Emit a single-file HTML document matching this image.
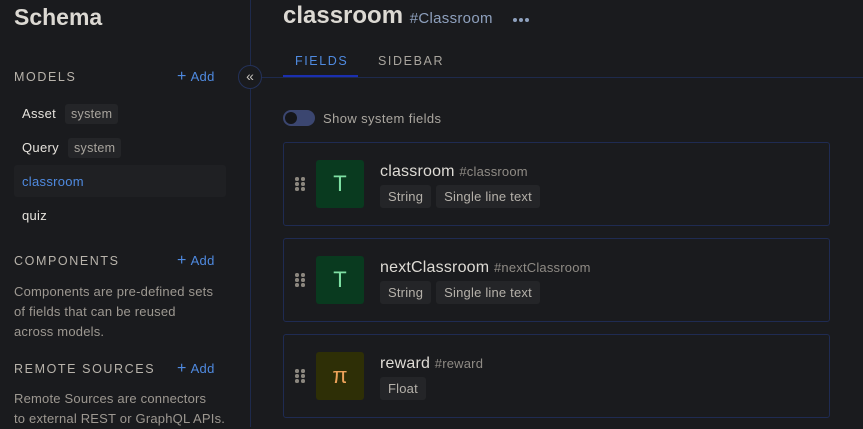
<!DOCTYPE html>
<html><head><style>
*{margin:0;padding:0;box-sizing:border-box}
body{width:863px;height:427px;overflow:hidden;background:#1a1b1e;font-family:"Liberation Sans",sans-serif;position:relative;color:#d9d6d0}
.a{position:absolute;white-space:nowrap}
.lbl{font-size:12.5px;letter-spacing:1.6px;color:#b8b3ab}
.add{color:#4f8ae0;font-size:13px;letter-spacing:0.3px}
.add b{font-weight:normal;font-size:16px;line-height:13px}
.item{font-size:13px;color:#e6e3dd;letter-spacing:0.3px}
.badge{background:#242528;color:#a8a49d;font-size:12.5px;padding:3px 6px;border-radius:3px;letter-spacing:0.3px}
.desc{font-size:13px;color:#9d9891;line-height:20px;letter-spacing:0.2px}
.card{position:absolute;left:283px;width:547px;height:84px;border:1px solid #1f2b52;border-radius:3px}
.ic{position:absolute;left:32px;top:17px;width:48px;height:48px;border-radius:3px;display:flex;align-items:center;justify-content:center;font-size:22px}
.dots{position:absolute;left:11px;top:34px;width:10px;height:14px}
.dots i{position:absolute;width:3.5px;height:3.5px;border-radius:50%;background:#8c877f}
.nm{position:absolute;left:96px;top:20px;font-size:16px;color:#dedbd5;letter-spacing:0.2px}
.nm span{font-size:13px;color:#8f8b85}
.tags{position:absolute;left:96px;top:42px;display:flex;gap:5px}
.tag{background:#242528;color:#b5b1aa;font-size:13px;padding:4px 8px;border-radius:3px;letter-spacing:0.2px}
</style></head><body>
<div class="a" style="left:14px;top:4px;font-size:23px;font-weight:bold;color:#dcd9d3">Schema</div>
<div class="a lbl" style="left:14px;top:70px">MODELS</div>
<div class="a add" style="left:177px;top:69px"><b>+</b>&nbsp;Add</div>
<div class="a item" style="left:22px;top:106px">Asset</div>
<div class="a badge" style="left:65px;top:104px">system</div>
<div class="a item" style="left:22px;top:140px">Query</div>
<div class="a badge" style="left:68px;top:138px">system</div>
<div class="a" style="left:14px;top:165px;width:212px;height:32px;background:#1f2023;border-radius:3px"></div>
<div class="a item" style="left:22px;top:174px;color:#4f8ae0">classroom</div>
<div class="a item" style="left:22px;top:208px">quiz</div>
<div class="a lbl" style="left:14px;top:254px">COMPONENTS</div>
<div class="a add" style="left:177px;top:253px"><b>+</b>&nbsp;Add</div>
<div class="a desc" style="left:14px;top:282px">Components are pre-defined sets<br>of fields that can be reused<br>across models.</div>
<div class="a lbl" style="left:14px;top:362px">REMOTE SOURCES</div>
<div class="a add" style="left:177px;top:361px"><b>+</b>&nbsp;Add</div>
<div class="a desc" style="left:14px;top:389px">Remote Sources are connectors<br>to external REST or GraphQL APIs.</div>
<div class="a" style="left:250px;top:0;width:1px;height:427px;background:#1e2a4c"></div>
<div class="a" style="left:250px;top:77px;width:613px;height:1px;background:#1e2a4c"></div>
<div class="a" style="left:238px;top:65px;width:24px;height:24px;border-radius:50%;border:1px solid #24325a;background:#1a1b1e;color:#c9c5bf;font-size:14px;text-align:center;line-height:21px">«</div>
<div class="a" style="left:283px;top:2px;font-size:24px;font-weight:bold;color:#dcd9d3">classroom <span style="font-size:15px;font-weight:normal;color:#8ea0bd;letter-spacing:0.3px">#Classroom</span></div>
<div class="a" style="left:513px;top:18px;width:4px;height:4px;border-radius:50%;background:#8ea0bd"></div>
<div class="a" style="left:519px;top:18px;width:4px;height:4px;border-radius:50%;background:#8ea0bd"></div>
<div class="a" style="left:525px;top:18px;width:4px;height:4px;border-radius:50%;background:#8ea0bd"></div>
<div class="a" style="left:295px;top:54px;font-size:12.5px;letter-spacing:1.6px;color:#4f8ae0">FIELDS</div>
<div class="a" style="left:283px;top:75px;width:75px;height:2px;background:#1b2fb0"></div>
<div class="a" style="left:378px;top:54px;font-size:12.5px;letter-spacing:1.6px;color:#a8a49d">SIDEBAR</div>
<div class="a" style="left:283px;top:110px;width:32px;height:16px;border-radius:8px;background:#3b4670"></div>
<div class="a" style="left:285px;top:112px;width:12px;height:12px;border-radius:50%;background:#151619"></div>
<div class="a" style="left:323px;top:111px;font-size:13px;color:#aaa69f;letter-spacing:0.4px">Show system fields</div>

<div class="card" style="top:142px"><div class="dots"><i style="left:0;top:0"></i><i style="left:6px;top:0"></i><i style="left:0;top:5px"></i><i style="left:6px;top:5px"></i><i style="left:0;top:10px"></i><i style="left:6px;top:10px"></i></div>
<div class="ic" style="background:#093a1f;color:#7ee0a3">T</div>
<div class="nm">classroom <span>#classroom</span></div>
<div class="tags"><div class="tag">String</div><div class="tag">Single line text</div></div></div>

<div class="card" style="top:238px"><div class="dots"><i style="left:0;top:0"></i><i style="left:6px;top:0"></i><i style="left:0;top:5px"></i><i style="left:6px;top:5px"></i><i style="left:0;top:10px"></i><i style="left:6px;top:10px"></i></div>
<div class="ic" style="background:#093a1f;color:#7ee0a3">T</div>
<div class="nm">nextClassroom <span>#nextClassroom</span></div>
<div class="tags"><div class="tag">String</div><div class="tag">Single line text</div></div></div>

<div class="card" style="top:334px"><div class="dots"><i style="left:0;top:0"></i><i style="left:6px;top:0"></i><i style="left:0;top:5px"></i><i style="left:6px;top:5px"></i><i style="left:0;top:10px"></i><i style="left:6px;top:10px"></i></div>
<div class="ic" style="background:#2e2f06;color:#eea35a">π</div>
<div class="nm">reward <span>#reward</span></div>
<div class="tags"><div class="tag">Float</div></div></div>
</body></html>
